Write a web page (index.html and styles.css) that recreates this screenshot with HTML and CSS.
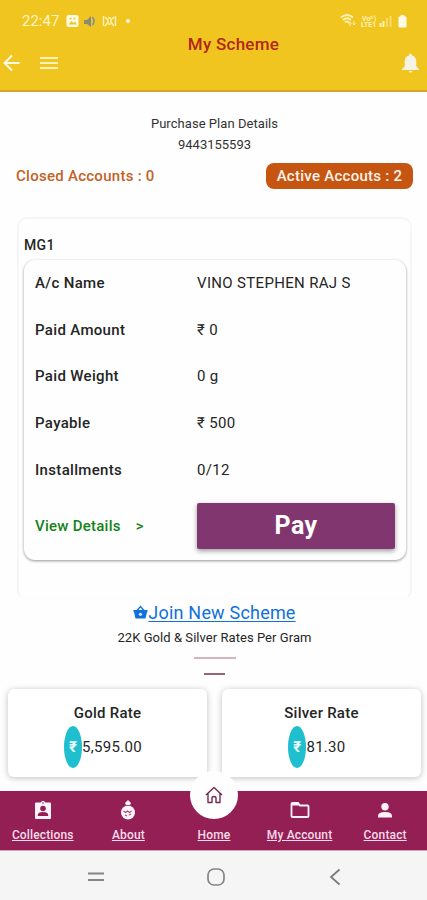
FILE: index.html
```html
<!DOCTYPE html>
<html lang="en">
<head>
<meta charset="utf-8">
<title>My Scheme</title>
<link rel="stylesheet" href="styles.css">
</head>
<body>
<div class="screen">
  <header class="header">
    <div class="status">
      <span class="clock">22:47</span>
      <svg class="status-left" width="66" height="14" viewBox="0 0 66 14">
        <rect x="0.5" y="1" width="12" height="12" rx="2" fill="#fffbe6"/>
        <path d="M2.500 10.500l3-3.500 2 2 1.500-1.500 2 3z" fill="#f0c520"/><path d="M3.500 4.500h2M7.500 4.500h2" stroke="#f0c520" stroke-width="1.500"/>
        <path d="M18 6h3l4-4v11l-4-3h-3z" fill="#8b8a78"/><path d="M26.500 3q3 4 0 8" stroke="#7a91a0" stroke-width="1.500" fill="none"/>
        <path d="M37.500 2v10M49.500 2v10M39 3l3 3v2l-3 4M48 3l-3 3v2l3 4M42 4l3 0M42 10h3" stroke="#fff3b8" stroke-width="1.400" fill="none"/>
        <circle cx="62" cy="7" r="2" fill="#fffbe6"/>
      </svg>
      <svg class="status-right" width="67" height="14" viewBox="0 0 67 14">
        <path d="M1 3.500q6-5 12 0M3 6q4-3.500 8 0M5 8.500q2-2 4 0" stroke="#fff3b8" stroke-width="1.700" fill="none"/><path d="M10 12V8M8.500 9.500L10 8l1.500 1.500M14 7v4M12.500 9.500L14 11l1.500-1.500" stroke="#fff3b8" fill="none"/>
        <text x="22" y="6.500" class="tiny">Voᴰ)</text><text x="21" y="13" class="tiny">LTE1</text>
        <path d="M40.500 13v-4M43.500 13V7" stroke="#fff3b8" stroke-width="2"/><path d="M47 13V4M50.500 13V2" stroke="#f8df78" stroke-width="1.700"/>
        <path d="M59 3h2V1.500h3V3h2v10h-7z" fill="#fffbe6" stroke="#fffbe6" stroke-linejoin="round"/>
      </svg>
    </div>
    <h1 class="title">My Scheme</h1>
    <div class="tools">
      <svg width="20" height="18" viewBox="0 0 20 18"><path d="M11.500 1.500L4 9l7.500 7.500M4 9h15" transform="translate(0.500)" fill="none" stroke="#fffbe6" stroke-width="1.900"/></svg>
      <svg class="menu" width="18" height="14" viewBox="0 0 18 14"><path d="M0 2h18M0 7h18M0 12h18" stroke="#fff3b8" stroke-width="2"/></svg>
      <svg class="bell" width="17" height="20" viewBox="0 0 17 20"><path d="M7 2.500C7 .2 10 .2 10 2.500c3 .8 4.300 3 4.300 6v5L17 16v1H0v-1l2.700-2.500v-5c0-3 1.300-5.200 4.300-6zM6.500 18h4q-2 3.500-4 0z" fill="#f7f3e4"/></svg>
    </div>
  </header>

  <main class="main">
    <p class="plan">Purchase Plan Details</p>
    <p class="phone">9443155593</p>
    <div class="accounts">
      <span class="closed">Closed Accounts : 0</span>
      <span class="active">Active Accouts : 2</span>
    </div>
    <section class="scheme">
      <h2 class="code">MG1</h2>
      <div class="details">
        <dl class="fields">
          <dt>A/c Name</dt><dd>VINO STEPHEN RAJ S</dd>
          <dt>Paid Amount</dt><dd>₹ 0</dd>
          <dt>Paid Weight</dt><dd>0 g</dd>
          <dt>Payable</dt><dd>₹ 500</dd>
          <dt>Installments</dt><dd>0/12</dd>
        </dl>
        <div class="actions">
          <a class="view"><span>View Details</span><span>&gt;</span></a>
          <button class="pay">Pay</button>
        </div>
      </div>
    </section>
    <a class="join">
      <svg width="15" height="14" viewBox="0 0 15 14"><path d="M0.500 5h3L7.500.5l4 4.500h3v2H14l-1.500 6.500h-10L1 7H.5zM7.500 2.500L5.500 5h4z" fill="#1170dc"/><circle cx="7.500" cy="9.300" r="1.600" fill="#cfe5ff"/></svg><span>Join New Scheme</span>
    </a>
    <p class="rates-title">22K Gold &amp; Silver Rates Per Gram</p>
    <div class="rule rule-long"></div>
    <div class="rule rule-short"></div>
    <section class="rates">
      <div class="rate"><h3>Gold Rate</h3><p><span class="coin">₹</span><span>5,595.00</span></p></div>
      <div class="rate"><h3>Silver Rate</h3><p><span class="coin">₹</span><span>81.30</span></p></div>
    </section>
  </main>

  <nav class="tabs">
    <a class="tab"><svg width="18" height="20" viewBox="0 0 18 20"><path d="M2 2.500h4.500Q9-1 11.500 2.500H16q1 0 1 1V18q0 1-1 1H2q-1 0-1-1V3.500q0-1 1-1z" fill="#fff2f8"/><circle cx="9" cy="8.500" r="2.800" fill="#931f55"/><path d="M3.800 16v-1q0-3 5.200-3t5.200 3v1z" fill="#931f55"/><circle cx="9" cy="3" r=".8" fill="#931f55"/></svg><span>Collections</span></a>
    <a class="tab"><svg width="18" height="20" viewBox="0 0 18 20"><path d="M9 0l3 3-1.500 3h-3L6 3z" fill="#fff2f8"/><circle cx="9" cy="12.500" r="7" fill="#fff2f8"/><path d="M6.500 5.500h5M4.500 11l2 1.500 2-1.500 2 1.500 2-1.500M6 15l2 1M10 15l2-1" stroke="#a54b78" stroke-width="1.200" fill="none"/></svg><span>About</span></a>
    <a class="tab"><i class="home"><svg width="18" height="18" viewBox="0 0 18 18"><path d="M1 9l8-7.500L17 9M3 7.500V16.500h4V12q0-1.500 2-1.500t2 1.500v4.500h4v-9" fill="none" stroke="#75284f" stroke-width="1.400" stroke-linejoin="round"/></svg></i><span>Home</span></a>
    <a class="tab"><svg width="20" height="20" viewBox="0 0 20 20"><path d="M1.500 4q0-1 1-1H8l2 2.500h7.500q1 0 1 1V16q0 1-1 1h-15q-1 0-1-1z" fill="none" stroke="#fff2f8" stroke-width="1.800"/><path d="M2 5.500h8L8 3H2z" fill="#fff2f8"/></svg><span>My Account</span></a>
    <a class="tab"><svg width="16" height="20" viewBox="0 0 16 20"><circle cx="8" cy="6.800" r="3.700" fill="#fff2f8"/><path d="M1 17.500V16q0-4 7-4t7 4v1.500z" fill="#fff2f8"/></svg><span>Contact</span></a>
  </nav>
  <footer class="system">
    <svg width="18" height="12" viewBox="0 0 18 12"><path d="M1 2.500h16M1 9h16" stroke="#858585" stroke-width="2"/></svg>
    <svg width="18" height="18" viewBox="0 0 18 18"><rect x="1" y="1" width="16" height="16" rx="6" fill="none" stroke="#858585" stroke-width="1.700"/></svg>
    <svg width="12" height="18" viewBox="0 0 12 18"><path d="M10.500 1.500L2 9l8.500 7.500" fill="none" stroke="#777" stroke-width="1.700"/></svg>
  </footer>
</div>
</body>
</html>
```

FILE: styles.css
```css
* { box-sizing: border-box; margin: 0; padding: 0; }
body { font-family: Roboto, "Noto Sans", sans-serif; background: #fefefe; color: #252525; }
svg { display: block; flex: none; }
.screen { width: 427px; height: 900px; display: flex; flex-direction: column; overflow: hidden; }
.header { height: 92px; flex: none; background: #f0c520; border-bottom: 2px solid #d1a62a; }
.status { display: flex; align-items: center; padding: 14px 20px 0 22px; height: 28px; }
.clock { font-size: 15px; color: #fff6c9; width: 38px; }
.status-left { margin-left: 6px; }
.status-right { margin-left: auto; }
.tiny { font-size: 7px; font-weight: 700; fill: #fff3b8; }
.title { margin: 6px 0 0 40px; text-align: center; font-size: 17px; line-height: 20px; font-weight: 500; letter-spacing: .25px; color: #b3261a; }
.tools { display: flex; align-items: center; height: 20px; padding-right: 8px; margin-top: -1px; }
.menu { margin-left: 20px; }
.bell { margin-left: auto; }
.main { height: 699px; flex: none; display: flex; flex-direction: column; align-items: center; padding: 21px 6px 0 8px; }
.plan, .phone { font-size: 13px; line-height: 21px; color: #333; }
.plan { letter-spacing: .05px; }
.accounts { align-self: stretch; display: flex; justify-content: space-between; align-items: center; margin: 8px 8px 0 8px; height: 26px; }
.closed, .active { font-size: 15px; font-weight: 500; letter-spacing: .27px; white-space: nowrap; }
.closed { color: #c26227; }
.active { width: 147px; height: 26px; line-height: 26px; text-align: center; color: #fff3e9; background: #c65512; border-radius: 8px; }
.scheme { width: 395px; height: 383px; margin: 28px 0 0; border: 2px solid #f6f6f6; border-bottom-color: #fdfdfd; border-radius: 10px; padding: 16px 5px 0; }
.code { font-size: 14px; line-height: 20px; font-weight: 500; letter-spacing: .3px; }
.details { width: 382px; height: 300px; margin-top: 5px; border-radius: 11px; background: #fefefe; box-shadow: 0 1px 3px rgba(0,0,0,.42); padding: 0 11px; }
.fields { display: grid; grid-template-columns: 162px 1fr; grid-auto-rows: 46.6px; align-items: center; font-size: 15px; letter-spacing: .33px; }
.fields dt { font-weight: 500; }
.actions { display: grid; grid-template-columns: 162px 198px; align-items: center; margin-top: 10px; }
.view { display: flex; gap: 15px; font-size: 15px; font-weight: 500; letter-spacing: .25px; color: #148218; }
.pay { height: 46px; border: 0; border-radius: 2px; background: #81366f; color: #fff; font: 700 25px Roboto, sans-serif; letter-spacing: .4px; box-shadow: 0 2px 5px rgba(0,0,0,.4); }
.join { display: flex; align-items: center; height: 24px; font-size: 18px; letter-spacing: .2px; color: #1170dc; }
.join span { text-decoration: underline; text-underline-offset: 2px; text-decoration-thickness: 1px; }
.rates-title { font-size: 13px; line-height: 20px; margin-top: 4px; letter-spacing: .05px; white-space: nowrap; }
.rule-long { width: 42px; height: 2px; background: #d4b5bd; margin-top: 9px; }
.rule-short { width: 21px; height: 2px; background: #956673; margin-top: 14px; }
.rates { display: grid; grid-template-columns: 199px 199px; gap: 15px; margin-top: 14px; }
.rate { height: 88px; border-radius: 6px; background: #fff; box-shadow: 0 1px 6px rgba(0,0,0,.25); text-align: center; padding-top: 14px; }
.rate h3 { font-size: 15px; line-height: 20px; font-weight: 500; letter-spacing: .25px; }
.rate p { display: flex; justify-content: center; align-items: center; font-size: 15px; letter-spacing: .3px; margin: 3px 9px 0 0; }
.coin { width: 18px; height: 42px; line-height: 42px; border-radius: 50%; background: #20bfd0; color: #e8fdff; font-weight: 700; }
.tabs { height: 60px; flex: none; background: #931f55; border-bottom: 1px solid #d5a3b8; display: grid; grid-template-columns: repeat(5, 85.6px); }
.tab { display: flex; flex-direction: column; align-items: center; padding-top: 9px; color: #f9dce9; font-size: 12px; font-weight: 500; letter-spacing: .15px; }
.tab span { line-height: 14px; margin-top: 8px; text-decoration: underline; white-space: nowrap; }
.home { width: 48px; height: 48px; border-radius: 50%; background: #fefefe; display: grid; place-items: center; margin: -29px 0 1px; }
.system { flex: 1; background: #f5f5f5; display: flex; align-items: center; padding: 2px 0 0 87px; }
.system svg:nth-child(2) { margin-left: 102px; }
.system svg:nth-child(3) { margin-left: 104px; }
```
